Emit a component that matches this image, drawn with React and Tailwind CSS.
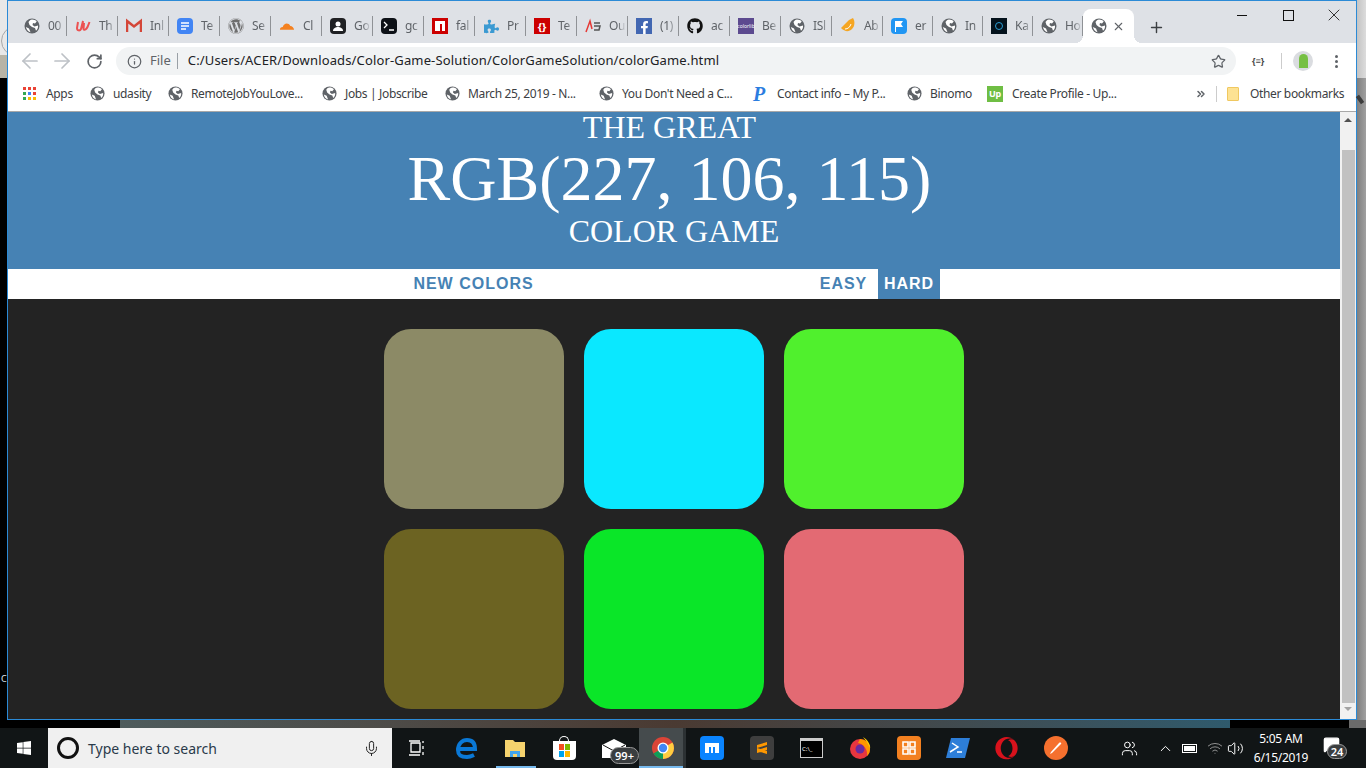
import React from 'react'
import { FaGithub, FaWordpress, FaFacebookF, FaPuzzlePiece, FaOpera, FaWindows } from 'react-icons/fa'
import { ArrowLeft, ArrowRight, RotateCw, Info, Star, Mic, Plus, X, ChevronUp, ChevronsRight, Users, Volume2, Wifi, MessageSquare } from 'lucide-react'

const sans = 'font-["Noto_Sans",sans-serif]'

const Globe = ({ size = 16 }) => (
  <svg width={size} height={size} viewBox="0 0 16 16" className="shrink-0">
    <circle cx="8" cy="8" r="7.5" fill="#5f6368" />
    <path d="M8 1.5c2 0 3.600.700 4.700 1.900L11 5.500 9 5l-.500 2 2 1.500 3.500-1c.300 2-.500 4-2 5.300L11 10 8 9 5.500 7 4.500 4 6 2.200c.600-.400 1.300-.700 2-.700zM2 9l3 1.500 1.500 3.800C4 13.600 2.300 11.600 2 9z" fill="#fff" />
  </svg>
)

const Box = ({ bg, children }) => (
  <span className={`w-4 h-4 shrink-0 flex items-center justify-center ${bg}`}>{children}</span>
)

const tabIcons = [
  <Globe />,
  <svg width="16" height="16" viewBox="0 0 16 16"><path d="M3 4l-1 6c0 3 3 3 4 1l2-8-1 7M9 5l-.500 6c1 2 3 0 4-2l2-5" fill="none" stroke="#ec5252" strokeWidth="2" /></svg>,
  <svg width="16" height="16" viewBox="0 0 16 16"><path d="M1 14V3l7 5.500L15 3v11" fill="none" stroke="#d44638" strokeWidth="2.500" /></svg>,
  <Box bg="bg-[#4285f4] rounded-sm"><svg width="12" height="12" viewBox="0 0 12 12"><path d="M2 3h8M2 6h8M2 9h5" stroke="#fff" strokeWidth="1.500" /></svg></Box>,
  <FaWordpress size={16} color="#6e6e6e" />,
  <svg width="17" height="16" viewBox="0 0 17 16"><path d="M1 12c0-2 1-3 3-3 1-4 6-5 8-1 2 0 4 2 4 4z" fill="#f48120" /></svg>,
  <Box bg="bg-[#202124] rounded-sm"><svg width="12" height="12" viewBox="0 0 12 12"><circle cx="6" cy="4" r="2.500" fill="#fff" /><path d="M1 11c0-3 3-4 5-4s5 1 5 4z" fill="#fff" /></svg></Box>,
  <Box bg="bg-[#0d1117] rounded-sm"><svg width="12" height="12" viewBox="0 0 12 12"><path d="M1 2l3 3-3 3M6 10h5" fill="none" stroke="#fff" strokeWidth="1.300" /></svg></Box>,
  <Box bg="bg-[#c00]"><svg width="12" height="12" viewBox="0 0 12 12"><path d="M1 1h10v10H8V4H6v7H1z" fill="#fff" /></svg></Box>,
  <FaPuzzlePiece size={15} color="#3b9ad2" />,
  <Box bg="bg-[#c00]"><span className="text-[11px] leading-none font-bold text-white">{'{}'}</span></Box>,
  <svg width="16" height="16" viewBox="0 0 16 16"><path d="M1 14L5 3l2 8" fill="none" stroke="#e53935" strokeWidth="1.500" /><path d="M9 5h6M9 8h6l-1 4H9" fill="none" stroke="#555" strokeWidth="1.500" /></svg>,
  <Box bg="bg-[#4267b2] items-end"><FaFacebookF size={13} color="#fff" /></Box>,
  <FaGithub size={16} color="#111" />,
  <Box bg="bg-[#5c4a8f]"><span className="text-[5px] leading-none text-white">colorlib</span></Box>,
  <Globe />,
  <svg width="16" height="16" viewBox="0 0 16 16"><path d="M1 10l8-8 4-2c2 3 2 8-1 11-3 3-7 3-11-1z" fill="#f5a623" /><path d="M5 11c3 0 5-2 6-5" stroke="#fff" fill="none" /></svg>,
  <Box bg="bg-[#2196f3] rounded-sm"><svg width="10" height="12" viewBox="0 0 10 12"><path d="M1 1h8l-2 3 2 3H2v5H1z" fill="#fff" /></svg></Box>,
  <Globe />,
  <Box bg="bg-[#04121c]"><span className="w-2 h-2 rounded-full border border-[#2a9fd6]" /></Box>,
  <Globe />,
]

const tabLabels = ['00', 'Th', 'Inl', 'Te', 'Se', 'Cl', 'Go', 'gc', 'fal', 'Pr', 'Te', 'Ou', '(1)', 'ac', 'Be', 'ISl', 'Ab', 'er', 'In', 'Ka', 'Ho']

const Tab = ({ icon, label, wide }) => (
  <div className={`flex items-center h-[20px] mt-[7px] pl-[8px] border-r border-[#8f9296] shrink-0 ${wide ? 'w-[51px]' : 'w-[50px]'}`}>
    <span className="w-4 h-4 flex items-center justify-center shrink-0">{icon}</span>
    <span className="ml-[8px] w-[17px] overflow-hidden whitespace-nowrap text-xs tracking-[-0.3px] text-[#5f6368] [mask-image:linear-gradient(to_right,black_50%,transparent)]">{label}</span>
  </div>
)

const TabStrip = () => (
  <div className="h-[42px] bg-[#dee1e6] flex relative pl-[8px]">
    <div className="flex items-start pt-[8px]">
      {tabIcons.map((icon, i) => (
        <Tab key={i} icon={icon} label={tabLabels[i]} wide={i < 17} />
      ))}
    </div>
    <div className="relative w-[51px] h-[34px] mt-[8px] bg-white rounded-t-lg flex items-center pl-[8px] gap-[5px] shrink-0">
      <Globe />
      <X size={13} strokeWidth={2} color="#5f6368" />
      <span className="absolute bottom-0 -left-2 w-2 h-2 bg-[radial-gradient(circle_at_0_0,transparent_8px,white_8px)]" />
      <span className="absolute bottom-0 -right-2 w-2 h-2 bg-[radial-gradient(circle_at_100%_0,transparent_8px,white_8px)]" />
    </div>
    <div className="ml-[12px] mt-[16px] w-5 h-5 flex items-center justify-center">
      <Plus size={17} strokeWidth={2} color="#3c4043" />
    </div>
    <div className="ml-auto flex items-start pt-[4px] pr-[12px] gap-[26px]">
      <span className="w-5 h-5 flex items-center justify-center"><span className="w-[10px] h-px bg-[#111]" /></span>
      <span className="w-5 h-5 flex items-center justify-center"><span className="w-[11px] h-[11px] border border-[#111]" /></span>
      <span className="w-5 h-5 flex items-center justify-center"><X size={20} strokeWidth={1} color="#111" /></span>
    </div>
  </div>
)

const Toolbar = () => (
  <div className="h-[33px] pt-[3px] bg-white flex items-center pl-[10px] pr-[5px]">
    <ArrowLeft size={24} strokeWidth={1.700} color="#bdc1c6" />
    <ArrowRight size={24} strokeWidth={1.700} color="#bdc1c6" className="ml-[8px]" />
    <RotateCw size={17} color="#5f6368" strokeWidth={2.400} className="ml-[12px]" />
    <div className="ml-[13px] w-[1120px] h-[28px] bg-[#f1f3f4] rounded-full flex items-center pl-[11px] pr-[10px] text-[#5f6368]">
      <Info size={15} strokeWidth={2} />
      <span className="ml-[8px] text-[13px]">File</span>
      <span className="ml-[6px] h-[16px] border-l border-[#9aa0a6]" />
      <span className="ml-[10px] text-[13px] text-[#202124] tracking-[0.143px] whitespace-nowrap">C:/Users/ACER/Downloads/Color-Game-Solution/ColorGameSolution/colorGame.html</span>
      <Star size={15} strokeWidth={2} className="ml-auto" />
    </div>
    <span className="ml-[16px] text-[9px] font-bold text-[#444]">{'{≡}'}</span>
    <span className="ml-[17px] h-[16px] border-l border-[#ccc]" />
    <span className="ml-[11px] w-5 h-5 rounded-full bg-[#dadce0] flex items-center justify-center">
      <span className="w-[9px] h-[14px] rounded-t-full rounded-b-sm bg-[#76c043]" />
    </span>
    <span className="ml-[22px] flex flex-col gap-[2px]">
      <span className="w-[3px] h-[3px] rounded-full bg-[#5f6368]" />
      <span className="w-[3px] h-[3px] rounded-full bg-[#5f6368]" />
      <span className="w-[3px] h-[3px] rounded-full bg-[#5f6368]" />
    </span>
  </div>
)

const AppsIcon = () => {
  const dots = ['bg-[#ea4335]', 'bg-[#ea4335]', 'bg-[#ea4335]', 'bg-[#34a853]', 'bg-[#4285f4]', 'bg-[#ea4335]', 'bg-[#34a853]', 'bg-[#fbbc05]', 'bg-[#fbbc05]']
  return (
    <span className="grid grid-cols-3 gap-[2px] w-[13px] shrink-0">
      {dots.map((d, i) => <span key={i} className={`w-[3px] h-[3px] ${d}`} />)}
    </span>
  )
}

const bookmarks = [
  { label: 'Apps', icon: <AppsIcon />, w: 'w-[67px]', gap: 'ml-[10px]' },
  { label: 'udasity', icon: <Globe size={15} />, w: 'w-[78px]', gap: 'ml-[8px]' },
  { label: 'RemoteJobYouLove...', icon: <Globe size={15} />, w: 'w-[154px]', gap: 'ml-[8px]' },
  { label: 'Jobs | Jobscribe', icon: <Globe size={15} />, w: 'w-[123px]', gap: 'ml-[8px]' },
  { label: 'March 25, 2019 - N...', icon: <Globe size={15} />, w: 'w-[154px]', gap: 'ml-[8px]' },
  { label: "You Don't Need a C...", icon: <Globe size={15} />, w: 'w-[154px]', gap: 'ml-[8px]' },
  { label: 'Contact info – My P...', icon: <span className="w-4 text-[#2b7de0] font-['Liberation_Serif',serif] italic font-bold text-xl leading-none">P</span>, w: 'w-[154px]', gap: 'ml-[8px]' },
  { label: 'Binomo', icon: <Globe size={15} />, w: 'w-[80px]', gap: 'ml-[8px]' },
  { label: 'Create Profile - Up...', icon: <Box bg="bg-[#6fbe44]"><span className="text-[9px] font-bold text-white leading-none">Up</span></Box>, w: 'w-[140px]', gap: 'ml-[9px]' },
]

const Bookmarks = () => (
  <div className="h-[36px] bg-white border-b border-[#a8a8a8] flex items-center pl-[15px] text-xs tracking-[-0.35px] text-[#3c4043] whitespace-nowrap">
    {bookmarks.map(b => (
      <div key={b.label} className={`flex items-center shrink-0 ${b.w}`}>
        {b.icon}
        <span className={b.gap}>{b.label}</span>
      </div>
    ))}
    <ChevronsRight size={12} color="#5f6368" strokeWidth={3} className="ml-[68px]" />
    <span className="ml-[9px] h-[16px] border-l border-[#ccc]" />
    <span className="ml-[10px] w-[12px] h-[14px] bg-[#fde293] border border-[#f0c860] rounded-[1px]" />
    <span className="ml-[11px]">Other bookmarks</span>
  </div>
)

const colors = ['bg-[#8c8a66]', 'bg-[#0ae8ff]', 'bg-[#50f02d]', 'bg-[#6c6322]', 'bg-[#0ae628]', 'bg-[#e36a73]']

const ColorGame = () => (
  <div className="flex-1 min-w-0 flex flex-col">
    <div className="h-[157px] bg-[#4682b4] text-white font-['Liberation_Serif',serif] uppercase text-center">
      <div className="text-[32px] leading-[30px] pr-[9px]">The Great</div>
      <div className="text-[64px] leading-[74px] pr-[9px]">RGB(227, 106, 115)</div>
      <div className="text-[32px] leading-[30px]">Color Game</div>
    </div>
    <div className="h-[30px] bg-white flex justify-center items-stretch font-['Liberation_Sans',sans-serif] font-bold text-base tracking-[1px] text-[#4682b4]">
      <span className="flex items-center justify-center w-[131px]">NEW COLORS</span>
      <span className="w-[276px]" />
      <span className="flex items-center justify-center w-[63px] pr-[6px]">EASY</span>
      <span className="flex items-center justify-center w-[62px] bg-[#4682b4] text-white">HARD</span>
    </div>
    <div className="flex-1 bg-[#232323] pt-[30px]">
      <div className="w-[580px] mx-auto grid grid-cols-3 gap-5">
        {colors.map(c => (
          <div key={c} className={`h-[180px] rounded-[27px] ${c}`} />
        ))}
      </div>
    </div>
  </div>
)

const Scrollbar = () => (
  <div className="w-[16px] bg-[#f1f1f1] flex flex-col items-center shrink-0">
    <span className="mt-[6px] w-0 h-0 border-x-[4px] border-x-transparent border-b-[4px] border-b-[#505050]" />
    <span className="mt-[28px] w-[13px] h-[553px] bg-[#c1c1c1]" />
    <span className="mt-[4px] w-0 h-0 border-x-[4px] border-x-transparent border-t-[4px] border-t-[#a3a3a3]" />
  </div>
)

const TaskIcon = ({ children, w = 'w-[49px]', active }) => (
  <div className={`h-full flex items-center justify-center shrink-0 relative ${w} ${active ? 'bg-[#454b4d]' : ''}`}>
    {children}
  </div>
)

const Taskbar = () => (
  <div className={`h-[40px] bg-[#111516] flex items-stretch text-white shrink-0 ${sans}`}>
    <div className="w-[48px] flex items-center justify-center"><FaWindows size={16} /></div>
    <div className="w-[344px] bg-[#f0f0f0] flex items-center pl-[9px] pr-[12px] text-[#2a3a4a]">
      <span className="w-[22px] h-[22px] rounded-full border-[3px] border-[#111]" />
      <span className="ml-[9px] text-[14px]">Type here to search</span>
      <Mic size={17} strokeWidth={1.400} color="#222" className="ml-auto" />
    </div>
    <div className="flex items-stretch">
      <TaskIcon>
        <svg width="17" height="16" viewBox="0 0 17 16"><path d="M3 3h9v9H3zM1 1h11M1 15h11M15 1v2M15 6v3M15 12v3" stroke="#fff" fill="none" strokeWidth="1.300" /></svg>
      </TaskIcon>
      <TaskIcon>
        <svg width="24" height="24" viewBox="0 0 24 24" className="ml-[3px]"><path d="M3 13h17c0-6-3-9-8-9s-9 4-9 10 4 7 9 7c3 0 5-1 7-2" fill="none" stroke="#0a78d6" strokeWidth="4" /></svg>
      </TaskIcon>
      <TaskIcon w="w-[50px]">
        <svg width="22" height="19" viewBox="0 0 22 19"><path d="M1 1h8l2 2h10v15H1z" fill="#f6d36e" /><path d="M6 18v-6h10v6h-3v-3H9v3z" fill="#41a5ee" /></svg>
        <span className="absolute bottom-0 left-[6px] w-[40px] h-[2px] bg-[#76b9ed]" />
      </TaskIcon>
      <TaskIcon>
        <span className="relative w-[23px] h-[19px] bg-white rounded-b-sm grid grid-cols-2 gap-[1px] px-[6px] py-[3px] mt-[5px]">
          <span className="bg-[#f25022]" /><span className="bg-[#7fba00]" /><span className="bg-[#00a4ef]" /><span className="bg-[#ffb900]" />
          <span className="absolute -top-[5px] left-[6px] w-[10px] h-[6px] rounded-t-full border border-b-0 border-white" />
        </span>
      </TaskIcon>
      <TaskIcon w="w-[50px]">
        <svg width="24" height="19" viewBox="0 0 24 19"><path d="M0 6l12-6 12 6v13H0z" fill="#fff" /><path d="M1 6l11 6 11-6" stroke="#111" fill="none" /></svg>
        <span className="absolute left-[21px] top-[19px] w-[29px] h-[17px] rounded-full bg-[#3a3d3f] border border-[#999] text-[11px] leading-[15px] text-center font-semibold">99+</span>
      </TaskIcon>
      <TaskIcon w="w-[47px]" active>
        <svg width="22" height="22" viewBox="0 0 22 22">
          <circle cx="11" cy="11" r="11" fill="#db4437" />
          <path d="M11 11L1.500 16.500A11 11 0 0 0 11 22z" fill="#0f9d58" />
          <path d="M11 11V22A11 11 0 0 0 20.500 5.500z" fill="#ffcd40" />
          <circle cx="11" cy="11" r="5.500" fill="#fff" />
          <circle cx="11" cy="11" r="4.200" fill="#4285f4" />
        </svg>
        <span className="absolute bottom-0 left-0 right-0 h-[2px] bg-[#76b9ed]" />
        <span className="absolute top-0 bottom-0 right-0 w-[3px] bg-[#2c3133]" />
      </TaskIcon>
      <TaskIcon w="w-[51px]">
        <span className="w-6 h-6 rounded bg-[#0a84ff] flex items-center justify-center">
          <svg width="16" height="12" viewBox="0 0 16 12"><path d="M1 11V1h14v10h-4V5H9v6H7V5H5v6z" fill="#fff" /></svg>
        </span>
      </TaskIcon>
      <TaskIcon w="w-[50px]">
        <span className="w-6 h-6 rounded-sm bg-[#3e3e3e] flex items-center justify-center">
          <svg width="12" height="14" viewBox="0 0 12 14"><path d="M1 4l10-3v3L1 7zM1 7l10 3v3L1 10zM11 6v3L1 12V9z" fill="#ff9800" /></svg>
        </span>
      </TaskIcon>
      <TaskIcon>
        <span className="w-[23px] h-[20px] bg-black border border-[#ccc] border-t-[3px] flex items-center pl-[1px]">
          <span className="text-[6px] leading-none">C:\_</span>
        </span>
      </TaskIcon>
      <TaskIcon w="w-[48px]">
        <svg width="22" height="22" viewBox="0 0 22 22">
          <circle cx="11" cy="12" r="10" fill="#e8363f" />
          <path d="M11 2a10 10 0 0 1 10 10c0 3-1 5-3 7 1-6-3-12-9-13z" fill="#ff9500" />
          <path d="M14 0c5 3 8 8 7 12-1-4-4-8-7-12z" fill="#ffcb00" />
          <circle cx="11" cy="12" r="4.500" fill="#6a2aa0" />
        </svg>
      </TaskIcon>
      <TaskIcon>
        <span className="w-6 h-6 rounded-sm bg-[#f38020] flex items-center justify-center">
          <svg width="18" height="18" viewBox="0 0 18 18"><path d="M3 3h5v5H3zM10 3h5v5h-5zM3 10h5v5H3zM10 10h5v5h-5z" stroke="#fff" strokeWidth="1.600" fill="none" /></svg>
        </span>
      </TaskIcon>
      <TaskIcon>
        <svg width="24" height="20" viewBox="0 0 24 20"><path d="M5 0h19l-5 20H0z" fill="#2d7ed8" /><path d="M6 5l6 4-8 5M11 14h5" stroke="#fff" strokeWidth="1.500" fill="none" /></svg>
      </TaskIcon>
      <TaskIcon>
        <FaOpera size={23} color="#d8121c" />
      </TaskIcon>
      <TaskIcon>
        <span className="w-6 h-6 rounded-full bg-[#f5702e] flex items-center justify-center">
          <svg width="16" height="16" viewBox="0 0 16 16"><path d="M2 14l2-1 9-9c1-1-1-2-2-1L3 12z" fill="#fff" /></svg>
        </span>
      </TaskIcon>
    </div>
    <div className="ml-auto flex items-center pr-[21px]">
      <Users size={17} strokeWidth={1.400} />
      <ChevronUp size={17} strokeWidth={1.400} className="ml-[19px]" />
      <span className="ml-[8px] w-[15px] h-[9px] border border-white p-[1px] flex"><span className="flex-1 bg-white" /></span>
      <Wifi size={16} strokeWidth={1.400} color="#9a9a9a" className="ml-[10px]" />
      <Volume2 size={17} strokeWidth={1.400} className="ml-[4px]" />
      <div className="ml-[5px] w-[64px] text-center text-xs tracking-[-0.3px] leading-[19px] whitespace-nowrap">
        <div>5:05 AM</div>
        <div>6/15/2019</div>
      </div>
      <div className="ml-[8px] relative w-[24px] h-[24px]">
        <MessageSquare size={17} fill="#fff" className="absolute left-[2px] top-0" />
        <span className="absolute left-[6px] top-[8px] w-[20px] h-[15px] rounded-full bg-[#3a3d3f] border border-[#999] text-[11px] leading-[13px] text-center font-semibold">24</span>
      </div>
    </div>
  </div>
)

export default function App() {
  return (
    <div className={`w-[1366px] h-[768px] overflow-hidden flex flex-col bg-black ${sans}`}>
      <div className="flex h-[720px]">
        <div className="w-[7px] shrink-0 flex flex-col overflow-hidden">
          <div className="h-[55px] bg-[#e8e8e8] overflow-hidden pt-[26px] pl-[1px]">
            <span className="block w-[30px] h-[30px] rounded-full border border-[#a8a8a8]" />
          </div>
          <div className="h-[23px] bg-[#b8b4a6]" />
          <div className="flex-1 bg-black flex items-end pb-[37px] pl-[1px]">
            <span className="text-[9px] leading-none text-[#dfe6ee]">C</span>
          </div>
        </div>
        <div className="w-[1350px] shrink-0 border border-[#2b8ad6] flex flex-col">
          <TabStrip />
          <Toolbar />
          <Bookmarks />
          <div className="flex-1 min-h-0 flex">
            <ColorGame />
            <Scrollbar />
          </div>
        </div>
        <div className="flex-1 flex flex-col">
          <div className="h-[78px] bg-gradient-to-r from-[#c4c4c4] to-[#dcdcdc]" />
          <div className="flex-1 bg-gradient-to-r from-[#7f7f7f] to-[#a0a0a0] flex flex-col">
            <span className="mt-[17px] ml-[1px] w-[4px] h-[9px] rotate-[-35deg] bg-[#3c3c3c]" />
          </div>
        </div>
      </div>
      <div className="h-[8px] flex">
        <div className="w-[120px] bg-black" />
        <div className="w-[1110px] bg-gradient-to-r from-[#4e5b5c] via-[#4a3a32] to-[#2f5a6c]" />
        <div className="w-[119px] bg-black" />
        <div className="flex-1 bg-[#6b6b6b]" />
      </div>
      <Taskbar />
    </div>
  )
}
